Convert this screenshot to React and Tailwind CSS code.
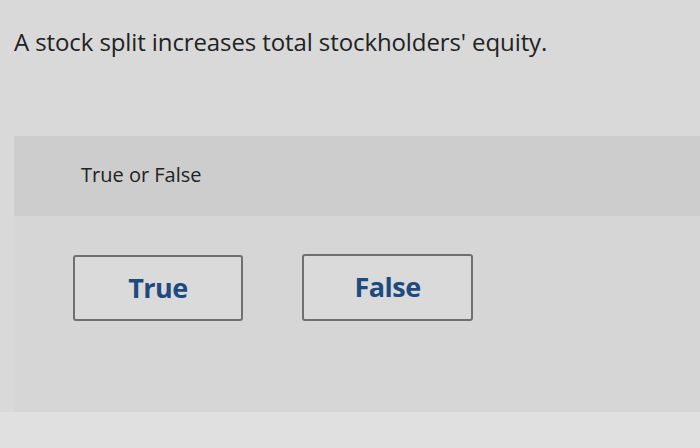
export default function App() {
  return (
    <div
      className="w-[700px] h-[448px] overflow-hidden bg-[#d9d9d9] text-[#222]"
      style={{ fontFamily: '"Open Sans", "Liberation Sans", sans-serif' }}
    >
      <h1 className="pl-[14px] pt-[26px] text-[24px] leading-[32px] tracking-[-0.1px]">
        A stock split increases total stockholders' equity.
      </h1>

      <div className="ml-[14px] mt-[78px] h-[276px] bg-[#d6d6d6]">
        <div className="h-[80px] bg-[#cdcdcd] pl-[67px] pt-[25px] text-[20px] leading-[28px]">
          True or False
        </div>
        <div className="flex gap-[59px] pl-[59px] pt-[39px]">
          <button className="w-[170px] h-[66px] rounded-[3px] border-2 border-[#707070] bg-[#dadada] text-[27px] font-bold text-[#1e4a80] tracking-[-0.5px]">
            True
          </button>
          <button className="w-[171px] h-[67px] -mt-px rounded-[3px] border-2 border-[#707070] bg-[#dadada] text-[27px] font-bold text-[#1e4a80] tracking-[-0.5px]">
            False
          </button>
        </div>
      </div>
      <div className="h-[40px] bg-[#e0e0e0]" />
    </div>
  );
}
